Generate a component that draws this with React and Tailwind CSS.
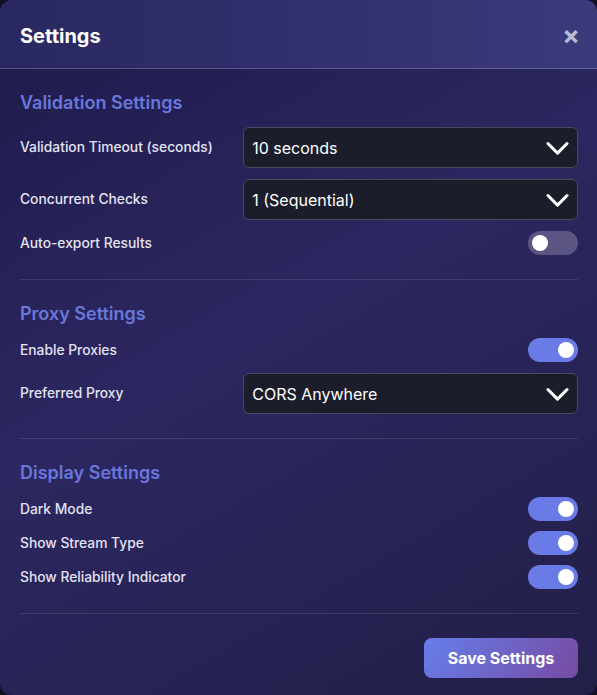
import React, { useState } from "react";

const Chevron = () => (
  <svg width="27" height="27" viewBox="0 0 24 24" fill="none" stroke="white" strokeWidth="2.7" strokeLinecap="round" strokeLinejoin="round">
    <path d="M3.5 8l8.5 8.5L20.5 8" />
  </svg>
);

const Select = ({ value, options, onChange }) => (
  <div className="relative w-[60%] shrink-0">
    <select
      value={value}
      onChange={(e) => onChange(e.target.value)}
      className="w-full h-[41px] appearance-none rounded-md border border-[#474a5c] bg-[#1b1e2a] pl-2 pr-10 text-base text-white outline-none"
    >
      {options.map((o) => (
        <option key={o}>{o}</option>
      ))}
    </select>
    <span className="pointer-events-none absolute right-[7px] top-1/2 -translate-y-1/2">
      <Chevron />
    </span>
  </div>
);

const Toggle = ({ on, onClick }) => (
  <button
    type="button"
    onClick={onClick}
    className={`relative h-6 w-[50px] rounded-full ${on ? "bg-[#6a7ae6]" : "bg-[#5a5582]"}`}
  >
    <span
      className={`absolute top-[4px] h-4 w-4 rounded-full bg-white ${on ? "left-[30px]" : "left-[4px]"}`}
    />
  </button>
);

const Row = ({ label, children }) => (
  <div className="flex items-center justify-between">
    <span className="text-[13.8px] font-medium text-[#e3e2f2]">{label}</span>
    {children}
  </div>
);

const Section = ({ title, children, tight }) => (
  <div className="border-b border-white/10 pb-6 mb-5">
    <h3 className="text-lg leading-[27px] font-semibold text-[#6977dc] mb-[11px]">{title}</h3>
    <div className={`flex flex-col ${tight ? "gap-[10px]" : "gap-[11px]"}`}>{children}</div>
  </div>
);

export default function App() {
  const [timeout, setTimeoutVal] = useState("10 seconds");
  const [concurrent, setConcurrent] = useState("1 (Sequential)");
  const [proxy, setProxy] = useState("CORS Anywhere");
  const [toggles, setToggles] = useState({
    autoExport: false,
    proxies: true,
    darkMode: true,
    streamType: true,
    reliability: true,
  });

  const flip = (key) => setToggles((t) => ({ ...t, [key]: !t[key] }));

  return (
    <div className="min-h-screen bg-[#12111f] font-['Inter',sans-serif]">
      <div className="h-[695px] rounded-xl overflow-hidden bg-[linear-gradient(150deg,#1f1a4a_0%,#2c2760_45%,#221f48_100%)]">
        <div className="flex h-[69px] items-center justify-between border-b border-white/20 bg-[linear-gradient(90deg,#2a2860_0%,#33316f_60%,#3b3a7c_100%)] pl-5 pr-[17px] pt-[3px]">
          <h2 className="text-xl font-bold text-white">Settings</h2>
          <button type="button" className="text-[26px] leading-none font-bold text-[#b9b9cf]">×</button>
        </div>

        <div className="pl-5 pr-[19px] pt-5">
          <Section title="Validation Settings">
            <Row label="Validation Timeout (seconds)">
              <Select
                value={timeout}
                onChange={setTimeoutVal}
                options={["5 seconds", "10 seconds", "15 seconds", "30 seconds"]}
              />
            </Row>
            <Row label="Concurrent Checks">
              <Select
                value={concurrent}
                onChange={setConcurrent}
                options={["1 (Sequential)", "2", "4", "8"]}
              />
            </Row>
            <Row label="Auto-export Results">
              <Toggle on={toggles.autoExport} onClick={() => flip("autoExport")} />
            </Row>
          </Section>

          <Section title="Proxy Settings">
            <Row label="Enable Proxies">
              <Toggle on={toggles.proxies} onClick={() => flip("proxies")} />
            </Row>
            <Row label="Preferred Proxy">
              <Select
                value={proxy}
                onChange={setProxy}
                options={["CORS Anywhere", "AllOrigins", "ThingProxy"]}
              />
            </Row>
          </Section>

          <Section title="Display Settings" tight>
            <Row label="Dark Mode">
              <Toggle on={toggles.darkMode} onClick={() => flip("darkMode")} />
            </Row>
            <Row label="Show Stream Type">
              <Toggle on={toggles.streamType} onClick={() => flip("streamType")} />
            </Row>
            <Row label="Show Reliability Indicator">
              <Toggle on={toggles.reliability} onClick={() => flip("reliability")} />
            </Row>
          </Section>

          <div className="flex justify-end pt-1">
            <button
              type="button"
              className="h-10 w-[154px] rounded-lg bg-[linear-gradient(120deg,#667eea_0%,#764ba2_100%)] text-base font-bold text-white"
            >
              Save Settings
            </button>
          </div>
        </div>
      </div>
    </div>
  );
}
